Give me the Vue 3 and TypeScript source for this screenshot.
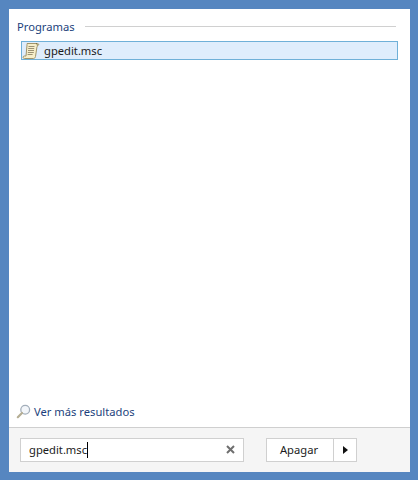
<script setup lang="ts">
const query: string = 'gpedit.msc'
</script>

<template>
  <div class="frame">
    <div class="panel">
      <div class="results">
        <div class="group-head">
          <span class="group-title">Programas</span>
          <span class="group-line"></span>
        </div>
        <div class="row">
          <svg class="scroll" width="18" height="18" viewBox="0 0 18 18">
            <path d="M5 1.5h10.5c1 0 1.5.8 1 1.6L15 4.5 13.5 14.5c-.2 1.2-1 2-2 2H2.5c-1 0-1.6-.7-1.4-1.5.1-.6.6-1 1.2-1H4L5 3c0-1 .2-1.5 0-1.5z" fill="#f6eeca" stroke="#a2956a" stroke-width="1"/>
            <path d="M6.5 4.5h6M6.2 6.5h6M6 8.5h6M5.8 10.5h6M5.6 12.5h5" stroke="#9c9274" stroke-width="1" fill="none"/>
            <path d="M14 1.5c1 .2 1.5 1 1.3 2" stroke="#6f6436" stroke-width="1" fill="none"/>
          </svg>
          <span class="row-text">gpedit.msc</span>
        </div>
      </div>
      <div class="more">
        <svg class="lens" width="15" height="15" viewBox="0 0 15 15">
          <circle cx="9.2" cy="5.8" r="4.4" fill="#f3f6fa" stroke="#a3aeba" stroke-width="1.3"/>
          <path d="M6 9 1.8 13.2" stroke="#b5ae94" stroke-width="2.2" stroke-linecap="round"/>
        </svg>
        <span class="more-text">Ver más resultados</span>
      </div>
      <div class="footer">
        <div class="search">
          <span class="search-text">{{ query }}</span><span class="caret"></span>
          <svg class="clear" width="9" height="9" viewBox="0 0 9 9">
            <path d="M1 1 8 8M8 1 1 8" stroke="#6f6f6f" stroke-width="2"/>
          </svg>
        </div>
        <div class="power">
          <span class="power-main">Apagar</span>
          <span class="power-arrow"><i class="tri"></i></span>
        </div>
      </div>
    </div>
  </div>
</template>

<style scoped>
.frame {
  box-sizing: border-box;
  width: 418px;
  height: 480px;
  padding: 9px 8px 8px 9px;
  background: #5686c0;
  font-family: "Noto Sans", "Open Sans", sans-serif;
  font-size: 11.2px;
}
.panel {
  height: 100%;
  display: flex;
  flex-direction: column;
  background: #fff;
}
.results {
  flex: 1;
  padding: 9px 12px 0 8px;
}
.group-head {
  display: flex;
  align-items: center;
  gap: 10px;
  height: 16px;
}
.group-title {
  color: #1c3f7c;
}
.group-line {
  flex: 1;
  height: 1px;
  margin-right: 2px;
  background: #d0d0d0;
}
.row {
  box-sizing: border-box;
  display: flex;
  align-items: center;
  gap: 4px;
  height: 19px;
  margin: 7px 0 0 4px;
  border: 1px solid #6fb0d8;
  background: #dfedfc;
  color: #1b1b1b;
}
.scroll {
  flex: none;
}
.more {
  display: flex;
  align-items: center;
  gap: 3px;
  height: 18px;
  padding: 0 0 7px 7px;
  color: #1c3f7c;
}
.lens {
  flex: none;
}
.footer {
  box-sizing: border-box;
  display: flex;
  align-items: center;
  height: 45px;
  padding: 0 0 0 11px;
  background: #f5f5f5;
  border-top: 1px solid #cfcfcf;
}
.search {
  box-sizing: border-box;
  display: flex;
  align-items: center;
  width: 224px;
  height: 24px;
  padding: 0 8px 1px 8px;
  background: #fff;
  border: 1px solid #d0d0d0;
  color: #1b1b1b;
}
.caret {
  width: 1px;
  height: 16px;
  background: #000;
}
.clear {
  margin-left: auto;
}
.power {
  box-sizing: border-box;
  display: flex;
  width: 91px;
  height: 24px;
  margin-left: 22px;
  background: #fff;
  border: 1px solid #d0d0d0;
  color: #1b1b1b;
}
.power-main {
  box-sizing: border-box;
  width: 67px;
  padding: 0 2px 1px 0;
  display: flex;
  align-items: center;
  justify-content: center;
  border-right: 1px solid #d0d0d0;
}
.power-arrow {
  flex: 1;
  display: flex;
  align-items: center;
  justify-content: center;
}
.tri {
  width: 0;
  height: 0;
  border-left: 5px solid #111;
  border-top: 4px solid transparent;
  border-bottom: 4px solid transparent;
}
</style>
